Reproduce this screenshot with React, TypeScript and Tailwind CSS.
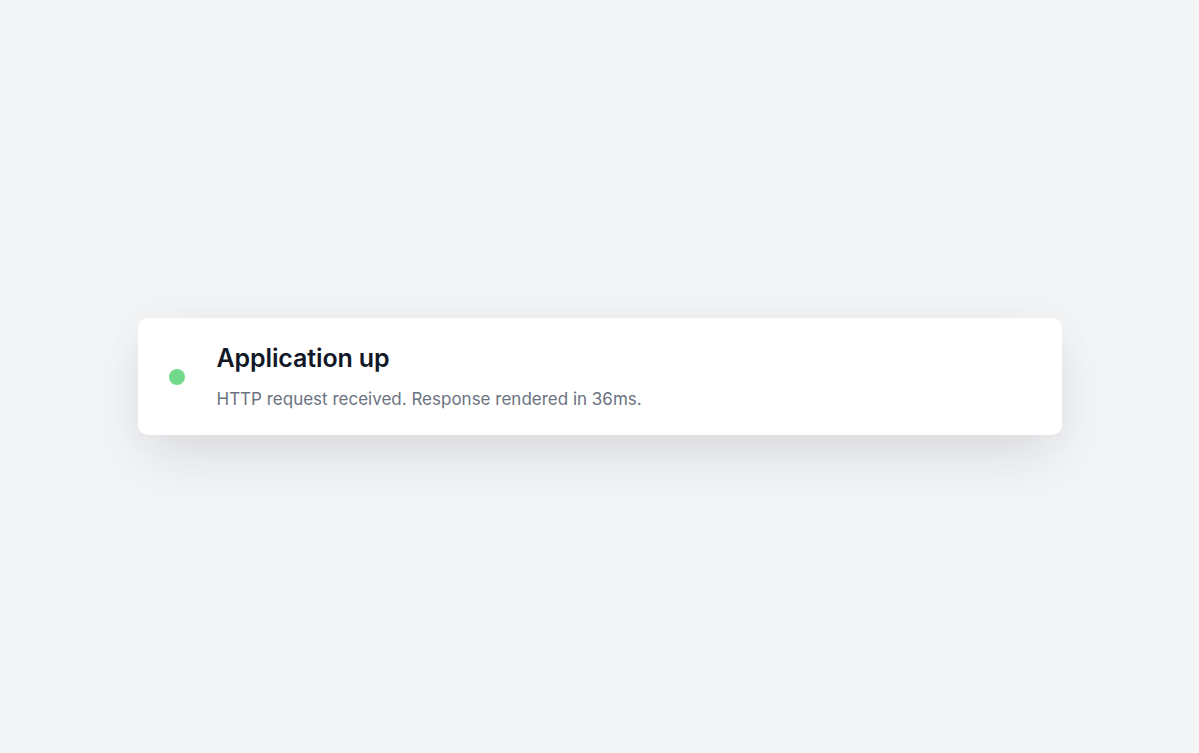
export default function App() {
  return (
    <div
      className="min-h-screen w-full bg-[#f3f4f6] flex items-center justify-center"
      style={{ fontFamily: "Inter, 'Noto Sans', sans-serif" }}
    >
      {/* status card */}
      <div className="w-[924px] h-[117px] bg-white rounded-[10px] shadow-[0_28px_56px_-10px_rgba(17,24,39,0.11),0_0_40px_0_rgba(17,24,39,0.035)] flex items-center pl-[31px] pr-8">
        <span className="w-4 h-4 rounded-full bg-[#72d98b] shrink-0" />
        <div className="ml-8 flex flex-col">
          <h2 className="text-[25px] leading-[32px] font-semibold text-[#111827] tracking-[-0.005em]">
            Application up
          </h2>
          <p className="mt-[13px] text-[17px] leading-[24px] text-[#6b7280]">
            HTTP request received. Response rendered in 36ms.
          </p>
        </div>
      </div>
    </div>
  )
}
